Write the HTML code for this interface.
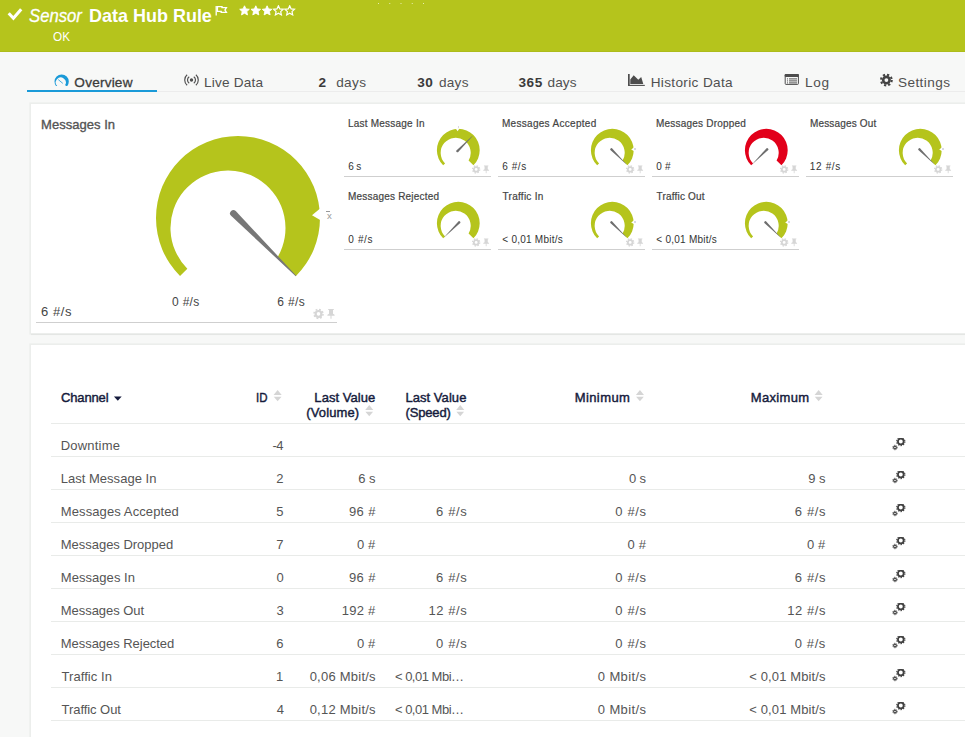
<!DOCTYPE html>
<html>
<head>
<meta charset="utf-8">
<title>Sensor Data Hub Rule</title>
<style>
*{box-sizing:border-box;margin:0;padding:0}
html,body{width:965px;height:737px;overflow:hidden}
body{font-family:"Liberation Sans",sans-serif;background:#f7f8f7;color:#444;position:relative}
.abs{position:absolute;white-space:nowrap}
#hdr{left:0;top:0;width:965px;height:52px;background:#b5c41c}
.t{position:absolute;white-space:nowrap;line-height:1}
.panel{position:absolute;background:#fff;box-shadow:0 0 0 1.6px #eceeec,0 2.2px 0.5px 0 #d8dad8}
.ln{position:absolute;height:1px;background:#cfcfcf}
.td{position:absolute;font-size:13px;color:#555;white-space:nowrap;line-height:1}
.r{text-align:right}
.rl{position:absolute;left:51px;width:914px;height:1px;background:#e9ebe9}
</style>
</head>
<body>
<svg width="0" height="0" style="position:absolute">
<defs>
<path id="garc" d="M-57.98 57.98A82 82 0 1 1 57.98 57.98L39.4 39.4A57.5 57.5 0 1 0 -50.66 50.66Z"/>
<path id="needle" d="M-6.5 -3.3A3.3 3.3 0 0 0 -6.5 3.3L82 0.4L82 -0.4Z"/>
<path id="notch" d="M84 -7.6L72.5 0L84 7.6Z"/>
<g id="sort"><path d="M0 5L4.05 0L8.1 5Z"/><path d="M0.2 6.7L4.05 11.2L7.9 6.7Z"/></g>
<g id="cogs"><circle cx="8.8" cy="3.5" r="2.85" fill="none" stroke="#404040" stroke-width="1.8"/><circle cx="8.8" cy="3.5" r="4.1" fill="none" stroke="#404040" stroke-width="1.1" stroke-dasharray="1.35 1.226"/><circle cx="3" cy="9.5" r="1.35" fill="none" stroke="#404040" stroke-width="1.1"/><circle cx="3" cy="9.5" r="2.25" fill="none" stroke="#404040" stroke-width="0.9" stroke-dasharray="0.9 0.867"/></g>
<g id="gp"><circle cx="5.2" cy="5" r="2.9" fill="none" stroke="#d6d6d6" stroke-width="2.2"/><circle cx="5.2" cy="5" r="4.5" fill="none" stroke="#d6d6d6" stroke-width="1.5" stroke-dasharray="1.8 1.734"/><path d="M14.9 0.2h5.6v1h-0.8v3.6l1.6 1v1h-3.1v3.1h-1v-3.1h-3.1v-1l1.6-1v-3.6h-0.8z" fill="#d6d6d6"/></g>
</defs>
</svg>
<div id="hdr" class="abs"></div>
<div id="hdrline" class="abs" style="left:0;top:51px;width:965px;height:1px;background:#adbc1b"></div>
<div class="abs" style="left:378px;top:3px;width:1px;height:1px;background:#e6ecb0;box-shadow:11.25px 0 #e6ecb0,22.5px 0 #e6ecb0,33.75px 0 #e6ecb0,45px 0 #e6ecb0"></div>
<svg class="abs" style="left:0px;top:0px" width="30" height="26" viewBox="0 0 30 26"><path d="M8.7 13.3L13.4 18.2L21.2 9.2" fill="none" stroke="#fff" stroke-width="3.1"/></svg>
<svg class="abs" style="left:215px;top:5px" width="13" height="11" viewBox="0 0 13 11"><path d="M1.2 1v9.5" stroke="#fff" stroke-width="1.3" fill="none"/><path d="M2.4 1.6h4.6v1h4.4l-1.4 2.4l1.4 2.4h-5.2v-1h-3.8z" fill="none" stroke="#fff" stroke-width="1.4"/></svg>
<svg class="abs" style="left:239px;top:5px" width="60" height="11" viewBox="0 0 60 11">
<g fill="#fff" stroke="#fff" stroke-width="0.9" stroke-linejoin="miter">
<path id="st" d="M5.5 0.8l1.45 3.1l3.35 0.4l-2.5 2.3l0.7 3.3l-3-1.7l-3 1.7l0.7-3.3l-2.5-2.3l3.35-0.4z"/>
<use href="#st" x="11.3"/><use href="#st" x="22.6"/>
<use href="#st" x="33.9" fill="none" stroke-width="1.2"/><use href="#st" x="45.2" fill="none" stroke-width="1.2"/>
</g></svg>
<div class="abs" style="left:27px;top:90px;width:130px;height:2px;background:#1a9ad8"></div>
<div class="abs" style="left:157px;top:91px;width:808px;height:1px;background:#ececec"></div>
<svg class="abs" style="left:53px;top:73px" width="17" height="13" viewBox="-8.65 -8.6 17 13"><g transform="scale(0.0872)"><use href="#garc" fill="#1a9ad8"/></g><path d="M1.2 1.8L-3.4 -2" stroke="#1a9ad8" stroke-width="0.8"/></svg>
<svg class="abs" style="left:183px;top:73px" width="17" height="14" viewBox="-0.5 -0.7 17 14"><circle cx="8" cy="6.3" r="1.7" fill="#505050"/><path d="M5.71 3.02A4 4 0 0 0 5.71 9.58M10.29 3.02A4 4 0 0 1 10.29 9.58M3.63 1.1A6.8 6.8 0 0 0 3.63 11.5M12.37 1.1A6.8 6.8 0 0 1 12.37 11.5" fill="none" stroke="#505050" stroke-width="1.15"/></svg>
<svg class="abs" style="left:628px;top:73px" width="18" height="14" viewBox="0 0 18 14"><path d="M0.85 1V12.4" stroke="#4d4d4d" stroke-width="1.7" fill="none"/><path d="M0 12.4H16.8" stroke="#4d4d4d" stroke-width="1.1" fill="none"/><path d="M2.3 10.9V6.4L5.7 2.2L10.3 6.8L13.2 4.1L15.3 10.9z" fill="#4d4d4d"/></svg>
<svg class="abs" style="left:784px;top:73px" width="16" height="13" viewBox="0 0 16 13"><rect x="1.2" y="1.5" width="13.2" height="9.9" rx="0.8" fill="none" stroke="#4d4d4d" stroke-width="1"/><rect x="0.7" y="1" width="14.2" height="2.9" rx="0.8" fill="#4d4d4d"/><path d="M3 5.9h1M5 5.9h8M3 7.9h1M5 7.9h8M3 9.9h1M5 9.9h8" stroke="#555" stroke-width="1"/></svg>
<svg class="abs" style="left:879px;top:73px" width="15" height="15" viewBox="-0.4 -0.05 15 15"><circle cx="7" cy="7" r="3.2" fill="none" stroke="#444" stroke-width="2.6"/><circle cx="7" cy="7" r="5.4" fill="none" stroke="#444" stroke-width="2" stroke-dasharray="2.2 2.04"/></svg>

<div class="panel" style="left:31px;top:103.6px;width:940px;height:229.6px"></div>
<div class="panel" style="left:31px;top:344.8px;width:940px;height:400px"></div>
<!-- big gauge -->
<svg class="abs" style="left:150px;top:130px" width="190" height="160" viewBox="-88 -88 190 160"><use href="#garc" fill="#b5c41c"/><path d="M83 -10.2L74 -2.8L83 2.5Z" fill="#fff"/><use href="#needle" fill="#777" transform="rotate(45)"/></svg>
<div class="t" id="xb" style="left:327.1px;top:210.5px;font-size:9.6px;color:#999">x</div><div class="abs" style="left:326px;top:211px;width:4px;height:1px;background:#999"></div>
<svg class="abs" style="left:313px;top:308px" width="24" height="12" viewBox="-0.3 -0.9 24 12"><use href="#gp"/></svg>
<div class="ln" style="left:36px;top:322px;width:301px"></div>
<svg class="abs" style="left:432px;top:124px" width="53" height="47" viewBox="-26.3 -26.2 53 47"><g transform="scale(0.2610)"><use href="#garc" fill="#b5c41c"/><use href="#notch" fill="#fff" transform="rotate(-92)"/><use href="#needle" fill="#6e6e6e" transform="rotate(-45) scale(0.93,1.35)"/></g></svg>
<svg class="abs" style="left:472px;top:165px" width="19" height="10" viewBox="0 -0.4 19 10"><g transform="scale(0.8)"><use href="#gp"/></g></svg>
<div class="ln" style="left:344px;top:176px;width:147px"></div>
<svg class="abs" style="left:586px;top:124px" width="53" height="47" viewBox="-26.3 -26.2 53 47"><g transform="scale(0.2610)"><use href="#garc" fill="#b5c41c"/><use href="#notch" fill="#fff" transform="rotate(-2.4)"/><use href="#needle" fill="#6e6e6e" transform="rotate(45) scale(0.93,1.35)"/></g></svg>
<svg class="abs" style="left:626px;top:165px" width="19" height="10" viewBox="0 -0.4 19 10"><g transform="scale(0.8)"><use href="#gp"/></g></svg>
<div class="ln" style="left:498px;top:176px;width:147px"></div>
<svg class="abs" style="left:740px;top:124px" width="53" height="47" viewBox="-26.3 -26.2 53 47"><g transform="scale(0.2610)"><use href="#garc" fill="#e2001a"/><use href="#needle" fill="#6e6e6e" transform="rotate(135) scale(0.93,1.35)"/></g></svg>
<svg class="abs" style="left:780px;top:165px" width="19" height="10" viewBox="0 -0.4 19 10"><g transform="scale(0.8)"><use href="#gp"/></g></svg>
<div class="ln" style="left:652px;top:176px;width:147px"></div>
<svg class="abs" style="left:894px;top:124px" width="53" height="47" viewBox="-26.3 -26.2 53 47"><g transform="scale(0.2610)"><use href="#garc" fill="#b5c41c"/><use href="#notch" fill="#fff" transform="rotate(-2.4)"/><use href="#needle" fill="#6e6e6e" transform="rotate(45) scale(0.93,1.35)"/></g></svg>
<svg class="abs" style="left:934px;top:165px" width="19" height="10" viewBox="0 -0.4 19 10"><g transform="scale(0.8)"><use href="#gp"/></g></svg>
<div class="ln" style="left:806px;top:176px;width:147px"></div>
<svg class="abs" style="left:432px;top:197px" width="53" height="47" viewBox="-26.3 -26.2 53 47"><g transform="scale(0.2610)"><use href="#garc" fill="#b5c41c"/><use href="#needle" fill="#6e6e6e" transform="rotate(135) scale(0.93,1.35)"/></g></svg>
<svg class="abs" style="left:472px;top:238px" width="19" height="10" viewBox="0 -0.4 19 10"><g transform="scale(0.8)"><use href="#gp"/></g></svg>
<div class="ln" style="left:344px;top:249px;width:147px"></div>
<svg class="abs" style="left:586px;top:197px" width="53" height="47" viewBox="-26.3 -26.2 53 47"><g transform="scale(0.2610)"><use href="#garc" fill="#b5c41c"/><use href="#notch" fill="#fff" transform="rotate(-2.4)"/><use href="#needle" fill="#6e6e6e" transform="rotate(45) scale(0.93,1.35)"/></g></svg>
<svg class="abs" style="left:626px;top:238px" width="19" height="10" viewBox="0 -0.4 19 10"><g transform="scale(0.8)"><use href="#gp"/></g></svg>
<div class="ln" style="left:498px;top:249px;width:147px"></div>
<svg class="abs" style="left:740px;top:197px" width="53" height="47" viewBox="-26.3 -26.2 53 47"><g transform="scale(0.2610)"><use href="#garc" fill="#b5c41c"/><use href="#notch" fill="#fff" transform="rotate(-2.4)"/><use href="#needle" fill="#6e6e6e" transform="rotate(45) scale(0.93,1.35)"/></g></svg>
<svg class="abs" style="left:780px;top:238px" width="19" height="10" viewBox="0 -0.4 19 10"><g transform="scale(0.8)"><use href="#gp"/></g></svg>
<div class="ln" style="left:652px;top:249px;width:147px"></div>
<div class="abs" style="left:457.6px;top:126.2px;width:1.6px;height:1.4px;background:#d9d9e2"></div>
<div class="abs" style="left:634.3px;top:148.2px;width:1.6px;height:1.4px;background:#d9d9e2"></div>
<div class="abs" style="left:942.3px;top:148.2px;width:1.6px;height:1.4px;background:#d9d9e2"></div>
<div class="abs" style="left:634.3px;top:221.2px;width:1.6px;height:1.4px;background:#d9d9e2"></div>
<div class="abs" style="left:788.3px;top:221.2px;width:1.6px;height:1.4px;background:#d9d9e2"></div>
<svg class="abs" style="left:113px;top:396px" width="9" height="6" viewBox="-0.9 -0.6 9 6"><path d="M0 0h7.8l-3.9 4.1z" fill="#151b3c"/></svg>
<svg class="abs" style="left:273px;top:390px" width="9" height="12" viewBox="-0.6 0 9 12"><use href="#sort" fill="#d5d5d5"/></svg><svg class="abs" style="left:365px;top:405px" width="9" height="12" viewBox="-0.2 0 9 12"><use href="#sort" fill="#d5d5d5"/></svg><svg class="abs" style="left:456px;top:405px" width="9" height="12" viewBox="-0.2 0 9 12"><use href="#sort" fill="#d5d5d5"/></svg><svg class="abs" style="left:635px;top:390px" width="9" height="12" viewBox="-0.9 0 9 12"><use href="#sort" fill="#d5d5d5"/></svg><svg class="abs" style="left:814px;top:390px" width="9" height="12" viewBox="-0.6 0 9 12"><use href="#sort" fill="#d5d5d5"/></svg>
<div class="rl" style="top:423px"></div>
<svg class="abs" style="left:892px;top:438px" width="14" height="13" viewBox="0 0 14 13"><use href="#cogs"/></svg>
<div class="rl" style="top:456px"></div>
<svg class="abs" style="left:892px;top:471px" width="14" height="13" viewBox="0 0 14 13"><use href="#cogs"/></svg>
<div class="rl" style="top:489px"></div>
<svg class="abs" style="left:892px;top:504px" width="14" height="13" viewBox="0 0 14 13"><use href="#cogs"/></svg>
<div class="rl" style="top:522px"></div>
<svg class="abs" style="left:892px;top:537px" width="14" height="13" viewBox="0 0 14 13"><use href="#cogs"/></svg>
<div class="rl" style="top:555px"></div>
<svg class="abs" style="left:892px;top:570px" width="14" height="13" viewBox="0 0 14 13"><use href="#cogs"/></svg>
<div class="rl" style="top:588px"></div>
<svg class="abs" style="left:892px;top:603px" width="14" height="13" viewBox="0 0 14 13"><use href="#cogs"/></svg>
<div class="rl" style="top:621px"></div>
<svg class="abs" style="left:892px;top:636px" width="14" height="13" viewBox="0 0 14 13"><use href="#cogs"/></svg>
<div class="rl" style="top:654px"></div>
<svg class="abs" style="left:892px;top:669px" width="14" height="13" viewBox="0 0 14 13"><use href="#cogs"/></svg>
<div class="rl" style="top:687px"></div>
<svg class="abs" style="left:892px;top:702px" width="14" height="13" viewBox="0 0 14 13"><use href="#cogs"/></svg>
<div class="rl" style="top:720px"></div>
<!-- texts -->
<div class="t" id="h1" style="left:29.32px;top:6px;font-size:19px;transform:scaleX(0.8785);transform-origin:0 0;color:#fff;font-style:italic;-webkit-text-stroke:0.3px #fff">Sensor</div>
<div class="t" id="h2" style="left:88.55px;top:6px;font-size:19px;transform:scaleX(0.9463);transform-origin:0 0;color:#fff;font-weight:bold">Data Hub Rule</div>
<div class="t" id="h3" style="left:52.63px;top:31px;font-size:12px;transform:scaleX(0.9780);transform-origin:0 0;color:#fff">OK</div>
<div class="t" id="t1" style="left:74.36px;top:76px;font-size:13.6px;letter-spacing:0.205px;color:#3c3c3c;-webkit-text-stroke:0.3px #3c3c3c">Overview</div>
<div class="t" id="t2" style="left:204.00px;top:76px;font-size:13.6px;letter-spacing:0.199px;color:#505050">Live Data</div>
<div class="t" id="t3a" style="left:318.61px;top:76px;font-size:13.6px;letter-spacing:0.000px;color:#3a3a3a;font-weight:bold">2</div>
<div class="t" id="t3b" style="left:336.17px;top:76px;font-size:13.6px;letter-spacing:0.378px;color:#505050">days</div>
<div class="t" id="t4a" style="left:417.14px;top:76px;font-size:13.6px;letter-spacing:0.646px;color:#3a3a3a;font-weight:bold">30</div>
<div class="t" id="t4b" style="left:438.96px;top:76px;font-size:13.6px;letter-spacing:0.252px;color:#505050">days</div>
<div class="t" id="t5a" style="left:518.41px;top:76px;font-size:13.6px;letter-spacing:0.560px;color:#3a3a3a;font-weight:bold">365</div>
<div class="t" id="t5b" style="left:547.54px;top:76px;font-size:13.6px;letter-spacing:0.082px;color:#505050">days</div>
<div class="t" id="t6" style="left:650.64px;top:76px;font-size:13.6px;letter-spacing:0.352px;color:#505050">Historic Data</div>
<div class="t" id="t7" style="left:805.07px;top:76px;font-size:13.6px;letter-spacing:0.696px;color:#505050">Log</div>
<div class="t" id="t8" style="left:897.97px;top:76px;font-size:13.6px;letter-spacing:0.410px;color:#505050">Settings</div>
<div class="t" id="bg1" style="left:41.11px;top:118px;font-size:13px;letter-spacing:0.025px;color:#555;-webkit-text-stroke:0.35px #555">Messages In</div>
<div class="t" id="bg2" style="left:40.96px;top:305px;font-size:13px;letter-spacing:0.576px;color:#444">6 #/s</div>
<div class="t" id="bg3" style="left:172.12px;top:296px;font-size:12px;letter-spacing:0.257px;color:#444">0 #/s</div>
<div class="t" id="bg4" style="left:277.20px;top:296px;font-size:12px;letter-spacing:0.372px;color:#444">6 #/s</div>
<div class="t" id="g0l" style="left:347.94px;top:119px;font-size:10px;letter-spacing:0.226px;color:#444;-webkit-text-stroke:0.2px #444">Last Message In</div>
<div class="t" id="g0v" style="left:348.22px;top:162px;font-size:10px;letter-spacing:-0.095px;color:#333">6 s</div>
<div class="t" id="g1l" style="left:501.94px;top:119px;font-size:10px;letter-spacing:0.301px;color:#444;-webkit-text-stroke:0.2px #444">Messages Accepted</div>
<div class="t" id="g1v" style="left:502.22px;top:162px;font-size:10px;letter-spacing:0.582px;color:#333">6 #/s</div>
<div class="t" id="g2l" style="left:655.94px;top:119px;font-size:10px;letter-spacing:0.212px;color:#444;-webkit-text-stroke:0.2px #444">Messages Dropped</div>
<div class="t" id="g2v" style="left:656.26px;top:162px;font-size:10px;letter-spacing:0.223px;color:#333">0 #</div>
<div class="t" id="g3l" style="left:809.94px;top:119px;font-size:10px;letter-spacing:0.166px;color:#444;-webkit-text-stroke:0.2px #444">Messages Out</div>
<div class="t" id="g3v" style="left:809.85px;top:162px;font-size:10px;letter-spacing:0.627px;color:#333">12 #/s</div>
<div class="t" id="g4l" style="left:347.94px;top:192px;font-size:10px;letter-spacing:0.207px;color:#444;-webkit-text-stroke:0.2px #444">Messages Rejected</div>
<div class="t" id="g4v" style="left:348.26px;top:235px;font-size:10px;letter-spacing:0.650px;color:#333">0 #/s</div>
<div class="t" id="g5l" style="left:502.61px;top:192px;font-size:10px;letter-spacing:0.256px;color:#444;-webkit-text-stroke:0.2px #444">Traffic In</div>
<div class="t" id="g5v" style="left:502.28px;top:235px;font-size:10px;letter-spacing:0.248px;color:#333">&lt; 0,01 Mbit/s</div>
<div class="t" id="g6l" style="left:656.61px;top:192px;font-size:10px;letter-spacing:0.186px;color:#444;-webkit-text-stroke:0.2px #444">Traffic Out</div>
<div class="t" id="g6v" style="left:656.28px;top:235px;font-size:10px;letter-spacing:0.253px;color:#333">&lt; 0,01 Mbit/s</div>
<div class="t" id="c1" style="left:60.90px;top:391px;font-size:13px;letter-spacing:-0.115px;color:#151b3c;-webkit-text-stroke:0.42px #151b3c">Channel</div>
<div class="t" id="c2" style="left:256.37px;top:391px;font-size:13px;transform:scaleX(0.8840);transform-origin:0 0;color:#151b3c;-webkit-text-stroke:0.42px #151b3c">ID</div>
<div class="t" id="c3" style="left:314.36px;top:391px;font-size:13px;letter-spacing:0.036px;color:#151b3c;-webkit-text-stroke:0.42px #151b3c">Last Value</div>
<div class="t" id="c3b" style="left:306.31px;top:406px;font-size:13px;letter-spacing:0.126px;color:#151b3c;-webkit-text-stroke:0.42px #151b3c">(Volume)</div>
<div class="t" id="c4" style="left:405.43px;top:391px;font-size:13px;letter-spacing:0.052px;color:#151b3c;-webkit-text-stroke:0.42px #151b3c">Last Value</div>
<div class="t" id="c4b" style="left:405.62px;top:406px;font-size:13px;letter-spacing:-0.182px;color:#151b3c;-webkit-text-stroke:0.42px #151b3c">(Speed)</div>
<div class="t" id="c5" style="left:574.63px;top:391px;font-size:13px;letter-spacing:0.433px;color:#151b3c;-webkit-text-stroke:0.42px #151b3c">Minimum</div>
<div class="t" id="c6" style="left:750.87px;top:391px;font-size:13px;letter-spacing:0.315px;color:#151b3c;-webkit-text-stroke:0.42px #151b3c">Maximum</div>
<div class="t" id="r0c0" style="left:60.76px;top:439px;font-size:13px;letter-spacing:0.203px;color:#555">Downtime</div>
<div class="t" id="r0c1" style="left:272.57px;top:439px;font-size:13px;letter-spacing:-0.540px;color:#555">-4</div>
<div class="t" id="r1c0" style="left:60.76px;top:472px;font-size:13px;letter-spacing:0.016px;color:#555">Last Message In</div>
<div class="t" id="r1c1" style="left:276.37px;top:472px;font-size:13px;letter-spacing:0.000px;color:#555">2</div>
<div class="t" id="r1c2" style="left:358.31px;top:472px;font-size:13px;letter-spacing:-0.023px;color:#555">6 s</div>
<div class="t" id="r1c4" style="left:628.90px;top:472px;font-size:13px;letter-spacing:-0.100px;color:#555">0 s</div>
<div class="t" id="r1c5" style="left:808.32px;top:472px;font-size:13px;letter-spacing:-0.121px;color:#555">9 s</div>
<div class="t" id="r2c0" style="left:60.76px;top:505px;font-size:13px;letter-spacing:0.109px;color:#555">Messages Accepted</div>
<div class="t" id="r2c1" style="left:276.27px;top:505px;font-size:13px;letter-spacing:0.000px;color:#555">5</div>
<div class="t" id="r2c2" style="left:348.94px;top:505px;font-size:13px;letter-spacing:0.384px;color:#555">96 #</div>
<div class="t" id="r2c3" style="left:436.03px;top:505px;font-size:13px;letter-spacing:0.655px;color:#555">6 #/s</div>
<div class="t" id="r2c4" style="left:615.34px;top:505px;font-size:13px;letter-spacing:0.641px;color:#555">0 #/s</div>
<div class="t" id="r2c5" style="left:794.79px;top:505px;font-size:13px;letter-spacing:0.655px;color:#555">6 #/s</div>
<div class="t" id="r3c0" style="left:60.76px;top:538px;font-size:13px;letter-spacing:-0.020px;color:#555">Messages Dropped</div>
<div class="t" id="r3c1" style="left:276.37px;top:538px;font-size:13px;letter-spacing:0.000px;color:#555">7</div>
<div class="t" id="r3c2" style="left:357.07px;top:538px;font-size:13px;letter-spacing:0.077px;color:#555">0 #</div>
<div class="t" id="r3c4" style="left:627.52px;top:538px;font-size:13px;letter-spacing:0.244px;color:#555">0 #</div>
<div class="t" id="r3c5" style="left:807.02px;top:538px;font-size:13px;letter-spacing:0.062px;color:#555">0 #</div>
<div class="t" id="r4c0" style="left:60.76px;top:571px;font-size:13px;letter-spacing:0.054px;color:#555">Messages In</div>
<div class="t" id="r4c1" style="left:276.56px;top:571px;font-size:13px;letter-spacing:0.000px;color:#555">0</div>
<div class="t" id="r4c2" style="left:348.94px;top:571px;font-size:13px;letter-spacing:0.384px;color:#555">96 #</div>
<div class="t" id="r4c3" style="left:436.03px;top:571px;font-size:13px;letter-spacing:0.655px;color:#555">6 #/s</div>
<div class="t" id="r4c4" style="left:615.34px;top:571px;font-size:13px;letter-spacing:0.641px;color:#555">0 #/s</div>
<div class="t" id="r4c5" style="left:794.79px;top:571px;font-size:13px;letter-spacing:0.655px;color:#555">6 #/s</div>
<div class="t" id="r5c0" style="left:60.76px;top:604px;font-size:13px;letter-spacing:-0.041px;color:#555">Messages Out</div>
<div class="t" id="r5c1" style="left:276.39px;top:604px;font-size:13px;letter-spacing:0.000px;color:#555">3</div>
<div class="t" id="r5c2" style="left:341.81px;top:604px;font-size:13px;letter-spacing:0.234px;color:#555">192 #</div>
<div class="t" id="r5c3" style="left:428.54px;top:604px;font-size:13px;letter-spacing:0.551px;color:#555">12 #/s</div>
<div class="t" id="r5c4" style="left:615.34px;top:604px;font-size:13px;letter-spacing:0.641px;color:#555">0 #/s</div>
<div class="t" id="r5c5" style="left:787.14px;top:604px;font-size:13px;letter-spacing:0.588px;color:#555">12 #/s</div>
<div class="t" id="r6c0" style="left:60.76px;top:637px;font-size:13px;letter-spacing:-0.040px;color:#555">Messages Rejected</div>
<div class="t" id="r6c1" style="left:276.36px;top:637px;font-size:13px;letter-spacing:0.000px;color:#555">6</div>
<div class="t" id="r6c2" style="left:357.07px;top:637px;font-size:13px;letter-spacing:0.077px;color:#555">0 #</div>
<div class="t" id="r6c3" style="left:436.07px;top:637px;font-size:13px;letter-spacing:0.633px;color:#555">0 #/s</div>
<div class="t" id="r6c4" style="left:615.34px;top:637px;font-size:13px;letter-spacing:0.641px;color:#555">0 #/s</div>
<div class="t" id="r6c5" style="left:794.86px;top:637px;font-size:13px;letter-spacing:0.571px;color:#555">0 #/s</div>
<div class="t" id="r7c0" style="left:61.56px;top:670px;font-size:13px;letter-spacing:0.057px;color:#555">Traffic In</div>
<div class="t" id="r7c1" style="left:276.08px;top:670px;font-size:13px;letter-spacing:0.000px;color:#555">1</div>
<div class="t" id="r7c2" style="left:309.64px;top:670px;font-size:13px;letter-spacing:0.239px;color:#555">0,06 Mbit/s</div>
<div class="t" id="r7c3" style="left:394.93px;top:670px;font-size:13px;letter-spacing:-0.495px;color:#555">&lt; 0,01 Mbi…</div>
<div class="t" id="r7c4" style="left:597.74px;top:670px;font-size:13px;letter-spacing:0.405px;color:#555">0 Mbit/s</div>
<div class="t" id="r7c5" style="left:749.34px;top:670px;font-size:13px;letter-spacing:0.112px;color:#555">&lt; 0,01 Mbit/s</div>
<div class="t" id="r8c0" style="left:61.56px;top:703px;font-size:13px;letter-spacing:-0.056px;color:#555">Traffic Out</div>
<div class="t" id="r8c1" style="left:276.64px;top:703px;font-size:13px;letter-spacing:0.000px;color:#555">4</div>
<div class="t" id="r8c2" style="left:309.64px;top:703px;font-size:13px;letter-spacing:0.239px;color:#555">0,12 Mbit/s</div>
<div class="t" id="r8c3" style="left:394.93px;top:703px;font-size:13px;letter-spacing:-0.495px;color:#555">&lt; 0,01 Mbi…</div>
<div class="t" id="r8c4" style="left:597.74px;top:703px;font-size:13px;letter-spacing:0.405px;color:#555">0 Mbit/s</div>
<div class="t" id="r8c5" style="left:749.34px;top:703px;font-size:13px;letter-spacing:0.112px;color:#555">&lt; 0,01 Mbit/s</div>
</body>
</html>
